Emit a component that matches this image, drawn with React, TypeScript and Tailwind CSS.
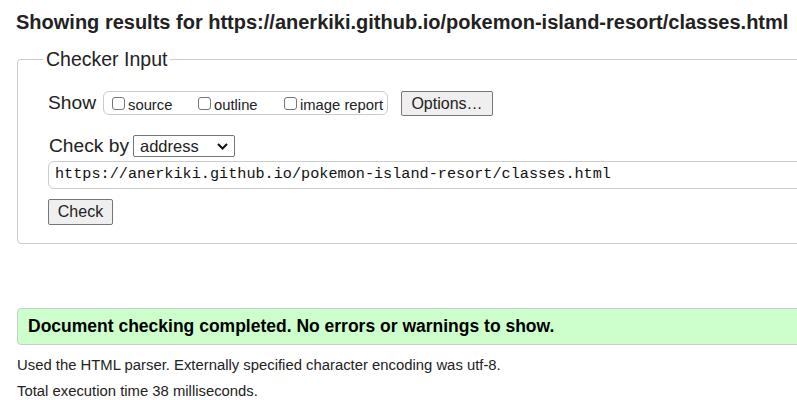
function Box({ label, width }: { label: string; width: string }) {
  return (
    <label className={`flex items-center ${width}`}>
      <span className="inline-block w-[13px] h-[13px] border border-[#767676] rounded-[3px] bg-white mr-[3px]" />
      <span className="text-[14.8px] leading-none translate-y-[2px]">{label}</span>
    </label>
  );
}

export default function App() {
  return (
    <div className="w-full h-[400px] overflow-hidden bg-white text-[#222] font-['Liberation_Sans',Arial,sans-serif]">
      <div className="w-[1000px]">
        <h2 className="pl-4 pt-[10px] text-[20px] font-bold leading-6">
          Showing results for https://anerkiki.github.io/pokemon-island-resort/classes.html
        </h2>

        <fieldset className="ml-[17px] mt-[13px] w-[960px] h-[197px] border border-[#ccc] rounded-[4px] pl-[30px]">
          <legend className="ml-[-5px] px-[3px] text-[19.5px] leading-6">Checker Input</legend>

          <div className="flex items-center mt-[18px]">
            <span className="text-[19.2px] mr-[7px]">Show</span>
            <div className="flex items-center h-[24px] w-[285px] border border-[#ccc] rounded-[6px] pl-[8px]">
              <Box label="source" width="w-[86px]" />
              <Box label="outline" width="w-[86px]" />
              <Box label="image report" width="w-[100px]" />
            </div>
            <button className="ml-[13px] h-[25px] w-[92px] bg-[#efefef] border border-[#767676] rounded-[2px] text-[16px]">
              Options…
            </button>
          </div>

          <div className="flex items-center mt-[14px] ml-[1px]">
            <span className="text-[19.2px] mr-[4px]">Check by</span>
            <div className="flex items-center justify-between h-[22px] w-[102px] border border-[#767676] rounded-[2px] pl-[6px] pr-[6px] text-[16.5px]">
              <span>address</span>
              <svg width="11" height="7" viewBox="0 0 11 7">
                <path d="M1 1l4.5 4.5L10 1" fill="none" stroke="#111" strokeWidth="2" />
              </svg>
            </div>
          </div>

          <div className="h-[28px] w-[950px] border border-[#ccc] rounded-[6px] flex items-center pl-[6px] text-[15.2px] text-[#111] font-['Liberation_Mono',monospace]">
            https://anerkiki.github.io/pokemon-island-resort/classes.html
          </div>

          <button className="mt-[10px] h-[26px] w-[65px] bg-[#efefef] border border-[#767676] rounded-[2px] text-[16px]">
            Check
          </button>
        </fieldset>

        <div className="ml-[17px] mt-[64px] w-[960px] h-[37px] bg-[#ccffcc] border border-[#ccc] rounded-[4px] flex items-center pl-[10px] text-[17.5px] font-bold text-black">
          Document checking completed. No errors or warnings to show.
        </div>

        <p className="ml-[17px] mt-[10px] text-[14.85px] leading-5">
          Used the HTML parser. Externally specified character encoding was utf-8.
        </p>
        <p className="ml-[17px] mt-[6px] text-[14.85px] leading-5">Total execution time 38 milliseconds.</p>
      </div>
    </div>
  );
}
